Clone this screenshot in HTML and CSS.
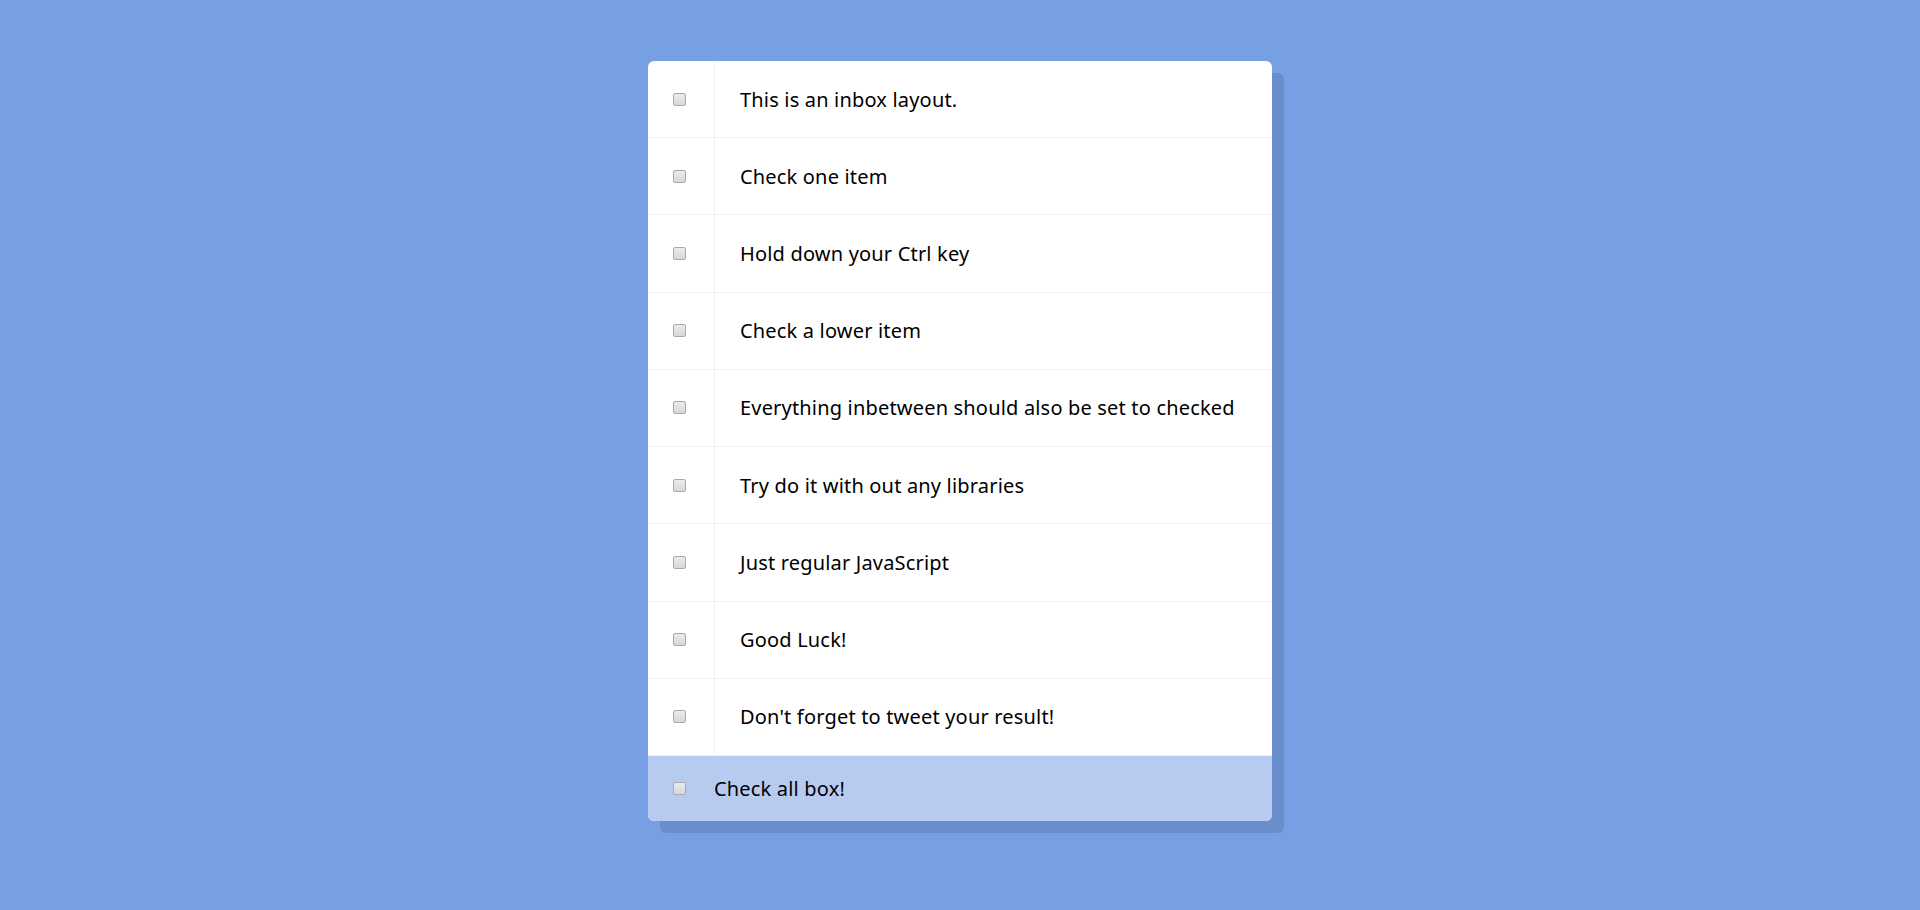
FILE: index.html
```html
<!DOCTYPE html>
<html>
<head>
<meta charset="utf-8">
<link rel="stylesheet" href="styles.css">
</head>
<body>
<div class="inbox">
  <div class="item"><span class="cb-cell"><input type="checkbox"></span><p>This is an inbox layout.</p></div>
  <div class="item"><span class="cb-cell"><input type="checkbox"></span><p>Check one item</p></div>
  <div class="item"><span class="cb-cell"><input type="checkbox"></span><p>Hold down your Ctrl key</p></div>
  <div class="item"><span class="cb-cell"><input type="checkbox"></span><p>Check a lower item</p></div>
  <div class="item"><span class="cb-cell"><input type="checkbox"></span><p>Everything inbetween should also be set to checked</p></div>
  <div class="item"><span class="cb-cell"><input type="checkbox"></span><p>Try do it with out any libraries</p></div>
  <div class="item"><span class="cb-cell"><input type="checkbox"></span><p>Just regular JavaScript</p></div>
  <div class="item"><span class="cb-cell"><input type="checkbox"></span><p>Good Luck!</p></div>
  <div class="item"><span class="cb-cell"><input type="checkbox"></span><p>Don't forget to tweet your result!</p></div>
  <div class="footer"><span class="cb-cell plain"><input type="checkbox"></span><span class="all">Check all box!</span></div>
</div>
</body>
</html>
```
FILE: styles.css
```css
html, body {
  margin: 0;
  padding: 0;
}
body {
  background: #779fe3;
  font-family: "Noto Sans", "Open Sans", sans-serif;
  min-height: 910px;
  padding-top: 61px;
  box-sizing: border-box;
}
.inbox {
  width: 624px;
  margin: 0 auto;
  background: #ffffff;
  border-radius: 6px;
  box-shadow: 12px 12px 0 rgba(0, 0, 0, 0.1);
  overflow: hidden;
}
.item {
  display: flex;
  align-items: stretch;
  border-bottom: 1px solid #f0f0f0;
}
.cb-cell {
  width: 66px;
  flex: none;
  display: flex;
  align-items: center;
  border-right: 1px solid #f0f0f0;
}
.cb-cell.plain {
  width: 66px;
  border-right: none;
}
input[type="checkbox"] {
  appearance: none;
  -webkit-appearance: none;
  width: 13px;
  height: 13px;
  margin: 0 0 0 25px;
  box-sizing: border-box;
  border: 1px solid #a9a9a9;
  border-radius: 2px;
  background: linear-gradient(#ebebeb, #d8d8d8);
}
p {
  margin: 0;
  flex: 1;
  padding: 0 25px;
  height: 76.22px;
  display: flex;
  align-items: center;
  font-size: 20px;
  letter-spacing: 0.18px;
  color: #000;
}
.footer {
  display: flex;
  height: 65px;
  background: #b7caf0;
}
.all {
  display: flex;
  align-items: center;
  font-size: 20px;
  letter-spacing: 0.18px;
  color: #000;
}
```
